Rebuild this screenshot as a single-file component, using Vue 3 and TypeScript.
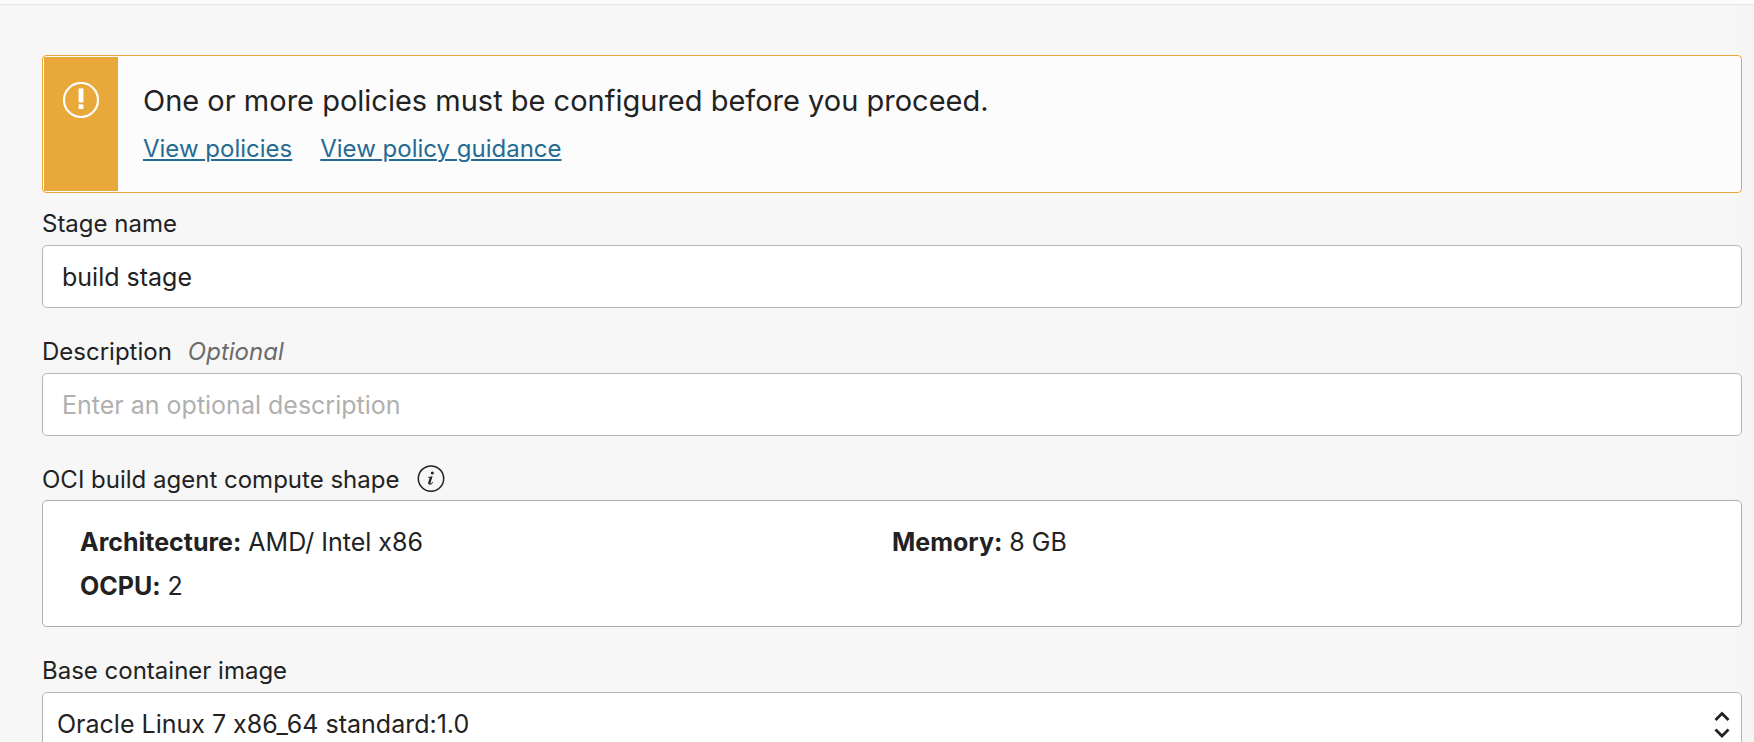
<script setup lang="ts">
import { ref } from 'vue'

interface ShapeItem {
  label: string
  value: string
}

const stageName = ref('build stage')
const description = ref('')
const images: string[] = ['Oracle Linux 7 x86_64 standard:1.0']
const baseImage = ref(images[0])

const shape: ShapeItem[] = [
  { label: 'Architecture:', value: 'AMD/ Intel x86' },
  { label: 'Memory:', value: '8 GB' },
  { label: 'OCPU:', value: '2' },
]
</script>

<template>
  <main class="panel">
    <section class="alert" role="alert">
      <div class="alert-side">
        <svg class="alert-icon" viewBox="0 0 36 36" aria-hidden="true">
          <circle cx="18" cy="18" r="17" fill="none" stroke="#fff" stroke-width="2.2" />
          <rect x="15.6" y="6.4" width="4.8" height="14" fill="#fff" />
          <rect x="15.6" y="22.4" width="4.8" height="4.6" fill="#fff" />
        </svg>
      </div>
      <div class="alert-body">
        <p class="alert-title">One or more policies must be configured before you proceed.</p>
        <nav class="alert-links">
          <a href="#policies">View policies</a>
          <a href="#guidance">View policy guidance</a>
        </nav>
      </div>
    </section>

    <form class="form" @submit.prevent>
      <div class="field">
        <label for="stage-name">Stage name</label>
        <input id="stage-name" v-model="stageName" class="control" type="text" />
      </div>

      <div class="field">
        <label for="description">Description<span class="optional">Optional</span></label>
        <input
          id="description"
          v-model="description"
          class="control"
          type="text"
          placeholder="Enter an optional description"
        />
      </div>

      <div class="field group" role="group" aria-labelledby="shape-label">
        <div class="group-head">
          <span id="shape-label">OCI build agent compute shape</span>
          <button class="info" type="button" aria-label="About compute shape">
            <svg viewBox="0 0 28 28" aria-hidden="true">
              <circle cx="14" cy="13.6" r="12.7" fill="none" stroke="#222" stroke-width="1.5" />
              <circle cx="15.3" cy="8.1" r="1.5" fill="#222" />
              <path
                d="M11 12 L15.6 11.3 L13.5 17.7 Q13.2 18.7 14 18.4 Q14.7 18 15.5 16.8 L16.1 17.2 Q14.6 19.7 12.6 19.7 Q10.6 19.6 11.2 17.5 L12.6 13.2 Q12.8 12.6 12.1 12.6 L10.9 12.7 Z"
                fill="#222"
              />
            </svg>
          </button>
        </div>
        <dl class="shape">
          <div v-for="item in shape" :key="item.label" class="shape-item">
            <dt>{{ item.label }}</dt>
            <dd>{{ item.value }}</dd>
          </div>
        </dl>
      </div>

      <div class="field">
        <label for="base-image">Base container image</label>
        <div class="select-wrap">
          <select id="base-image" v-model="baseImage" class="control select">
            <option v-for="image in images" :key="image" :value="image">{{ image }}</option>
          </select>
          <svg class="chevrons" viewBox="0 0 16 28" aria-hidden="true">
            <path d="M1.5 10 L8 3.5 L14.5 10 M1.5 19.5 L8 26 L14.5 19.5" fill="none" stroke="#222" stroke-width="2.8" />
          </svg>
        </div>
      </div>
    </form>
  </main>
</template>

<style>
html,
body {
  margin: 0;
  height: 100%;
  overflow: hidden;
  background: #f7f7f7;
}
</style>

<style scoped>
.panel {
  box-sizing: border-box;
  min-height: 100vh;
  padding: 50px 12px 0 42px;
  border-top: 5px solid transparent;
  background:
    linear-gradient(#e4e4e4, #e4e4e4) 0 4px / 100% 1px no-repeat border-box,
    linear-gradient(#fcfcfc, #fcfcfc) 0 0 / 100% 4px no-repeat border-box,
    linear-gradient(to right, #f7f7f7, #f4f4f4) right / 24px 100% no-repeat #f7f7f7;
  background-origin: border-box;
  color: #222;
  font-family: Inter, "Liberation Sans", sans-serif;
  font-size: 24px;
  font-variant-ligatures: no-contextual;
  line-height: 30px;
}

.alert {
  display: flex;
  box-sizing: border-box;
  min-height: 138px;
  padding: 1px;
  border: 1px solid #e8a93a;
  border-radius: 4px;
  background: #fcfcfc;
}

.alert-side {
  display: flex;
  justify-content: center;
  flex: none;
  width: 74px;
  padding-top: 25px;
  box-sizing: border-box;
  background: #e8a93a;
}

.alert-icon {
  width: 36px;
  height: 36px;
}

.alert-body {
  padding: 24px 25px;
}

.alert-title {
  margin: 0;
  font-size: 29px;
  line-height: 40px;
}

.alert-links {
  display: flex;
  gap: 28px;
  margin-top: 13px;
}

.alert-links a {
  color: #266b91;
  text-decoration-thickness: 2px;
  text-underline-offset: 2px;
}

.form {
  display: flex;
  flex-direction: column;
  gap: 29px;
  margin-top: 16px;
}

.field {
  display: flex;
  flex-direction: column;
  gap: 6px;
}

.group {
  gap: 5px;
}

.optional {
  margin-left: 16px;
  color: #6b6b6b;
  font-style: italic;
}

.control {
  box-sizing: border-box;
  width: 100%;
  height: 63px;
  margin: 0;
  padding: 0 19px;
  border: 1px solid #b4b4b9;
  border-radius: 5px;
  outline: 0;
  background: #fff;
  color: #222;
  font-family: inherit;
  font-size: 25px;
  font-variant-ligatures: no-contextual;
}

.control::placeholder {
  color: #b0b0b0;
  opacity: 1;
}

.group-head {
  display: flex;
  align-items: center;
  gap: 18px;
}

.info {
  width: 28px;
  height: 28px;
  margin-bottom: 2px;
  padding: 0;
  border: 0;
  background: none;
}

.info svg {
  display: block;
}

.shape {
  display: grid;
  grid-template-columns: 1fr 1fr;
  box-sizing: border-box;
  margin: 0;
  padding: 19px 37px 18px;
  border: 1px solid #adadb0;
  border-radius: 5px;
  background: #fff;
  font-size: 25px;
  line-height: 44px;
}

.shape-item {
  display: flex;
  gap: 7px;
}

.shape dt {
  font-weight: 700;
}

.shape dd {
  margin: 0;
}

.select-wrap {
  display: grid;
  align-items: center;
}

.select-wrap > * {
  grid-area: 1 / 1;
}

.select {
  padding: 0 48px 0 14px;
  appearance: none;
}

.chevrons {
  justify-self: end;
  width: 16px;
  height: 28px;
  margin-right: 12px;
  pointer-events: none;
}
</style>
